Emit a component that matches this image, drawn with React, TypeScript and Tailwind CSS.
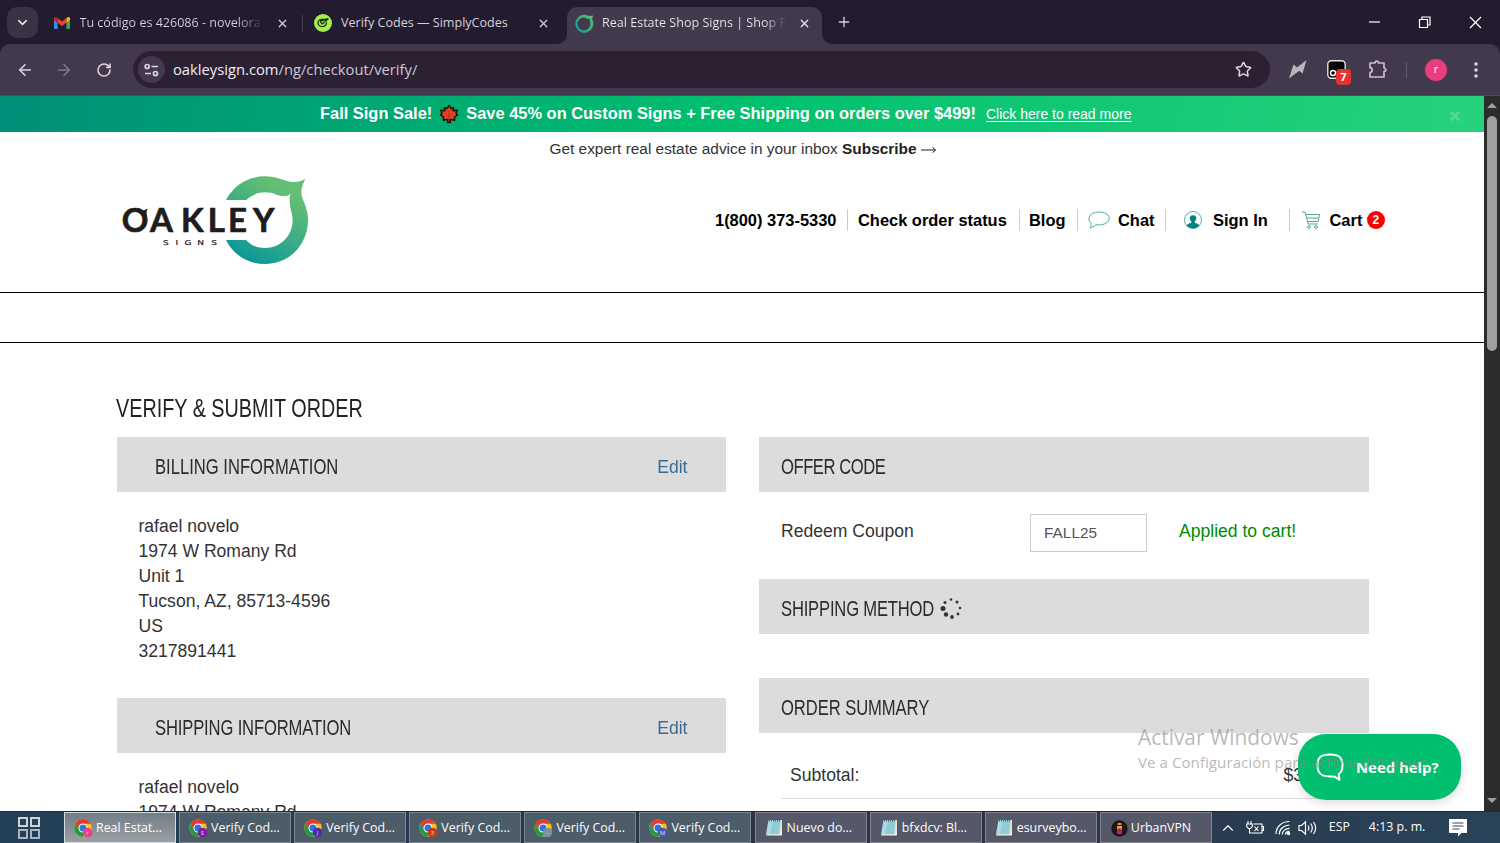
import type { ReactNode } from "react";
import { ArrowLeft, ArrowRight, ChevronDown, ChevronUp, Plus, RotateCw, Star, X } from "lucide-react";

const address = ["rafael novelo", "1974 W Romany Rd", "Unit 1", "Tucson, AZ, 85713-4596", "US", "3217891441"];

function GmailIcon() {
  return (
    <svg width="16" height="12" viewBox="0 0 16 12" className="shrink-0">
      <path d="M0 1.500V11a1 1 0 0 0 1 1h2.600V4.500z" fill="#4285f4" />
      <path d="M16 1.500V11a1 1 0 0 1-1 1h-2.600V4.500z" fill="#34a853" />
      <path d="M12.400 1.100 14 .2c1-.5 2 .2 2 1.300v1.600l-3.600 2.700z" fill="#fbbc04" />
      <path d="M3.600 1.100 8 4.400l4.400-3.300v4.700L8 9 3.600 5.800z" fill="#ea4335" />
      <path d="M0 1.500C0 .3 1.200-.4 2.200.1l1.400 1v4.700L0 3.100z" fill="#c5221f" />
    </svg>
  );
}

function SimplyIcon() {
  return (
    <svg width="18" height="18" viewBox="0 0 18 18" className="shrink-0">
      <circle cx="9" cy="9" r="9" fill="#a4f04b" />
      <path
        d="M9.500 5.500C6.500 4.800 4 6.500 4 9s3.300 4.500 6.300 3.200c2-1 2.200-2.500 2.200-3.200M6.800 8.500l1.700 1.500 5.500-5M6.500 7.300c1.500-1 3.500-1.500 7-2.300"
        fill="none"
        stroke="#1d2b12"
        strokeWidth="1.300"
        strokeLinecap="round"
      />
    </svg>
  );
}

function RingIcon() {
  return (
    <svg width="19" height="19" viewBox="0 0 19 19" className="shrink-0">
      <defs>
        <linearGradient id="ring" x1="0" y1="1" x2="1" y2="0">
          <stop offset="0" stopColor="#0c969a" />
          <stop offset="1" stopColor="#62bd71" />
        </linearGradient>
      </defs>
      <path
        d="M9 .8c2 0 3.600.7 4.800 1.300L18 1.500l-.8 3.900A9 9 0 1 1 9 .8zM9 3.400a6.400 6.400 0 1 0 6.200 5l-.6-3.400-2.700-.2A7 7 0 0 0 9 3.400z"
        fill="url(#ring)"
        fillRule="evenodd"
      />
    </svg>
  );
}

function ChromeIcon({ badge, letter }: { badge: string; letter: string }) {
  return (
    <svg width="19" height="19" viewBox="0 0 19 19" className="shrink-0">
      <circle cx="9" cy="9" r="8.700" fill="#fbc116" />
      <path d="M1.500 4.600A8.700 8.700 0 0 1 16.600 4.800H9L5.300 11z" fill="#e33b2e" />
      <path d="M1.500 4.600a8.700 8.700 0 0 0 7.300 13.100L12.700 11 9 13.200 5.300 11z" fill="#229a4a" />
      <circle cx="9" cy="9" r="4.500" fill="#fff" />
      <circle cx="9" cy="9" r="3.500" fill="#2f73e0" />
      <circle cx="13.500" cy="13.500" r="4.800" fill={badge} />
      <text x="13.500" y="15.700" fontSize="6" textAnchor="middle" fill="#ffffffcc" fontFamily="Open Sans, sans-serif">
        {letter}
      </text>
    </svg>
  );
}

function NotepadIcon() {
  return (
    <svg width="18" height="18" viewBox="0 0 18 18" className="mb-[3px] shrink-0">
      <path d="M4 2h13v15H2.500z" fill="#e9e2cf" />
      <path d="M3.500 2h12l-1.300 14.300H1z" fill="#a9dbe4" />
      <path d="M8 2h7.500l-1.300 14.300H5z" fill="#77bccb" opacity=".5" />
      <path d="M4 2.500h11.500" stroke="#4a626a" strokeWidth="2" strokeDasharray="1 1" />
      <path d="M1 16.500h13.500L16.700 14v3.500H1z" fill="#f5f2e9" />
    </svg>
  );
}

function VpnIcon() {
  return (
    <svg width="17" height="17" viewBox="0 0 17 17" className="shrink-0">
      <circle cx="8.500" cy="8.500" r="8.200" fill="#1b171b" />
      <rect x="6" y="6.500" width="5" height="7.500" rx="1" fill="#d3205d" />
      <path d="M6.700 3h3.600v2H6.700zM6 6h5v2l-2.500 3L6 8z" fill="#e6a23c" />
      <path d="M7.500 8.500h2v3h-2z" fill="#a3144c" />
    </svg>
  );
}

function Leaf() {
  return (
    <svg width="20" height="20" viewBox="0 0 20 20" className="mx-[7px] shrink-0">
      <path
        d="m10 1.500 2.300 3.200 2.300-.9-.3 3 4-.5-1.300 3 1.500 1.700-3.200 2.200.4 3-3.600-.8-1 .4.300 2.600H8.600l.3-2.600-1-.4-3.600.8.400-3-3.200-2.200L3 9.300l-1.300-3 4 .5-.3-3 2.300.9z"
        fill="#e5432a"
        stroke="#1c1206"
        strokeWidth="1.500"
        strokeLinejoin="round"
      />
      <path d="M10 6v9M10 13 6 9.500M10 13l4-3.500" stroke="#9b1d12" strokeWidth=".6" />
    </svg>
  );
}

function OakleyLogo() {
  return (
    <svg width="230" height="110" viewBox="0 0 690 330">
      <defs>
        <linearGradient id="oak" x1="0.100" y1="1" x2="0.600" y2="0.100">
          <stop offset="0" stopColor="#00939b" />
          <stop offset="0.500" stopColor="#35a988" />
          <stop offset="1" stopColor="#63bf73" />
        </linearGradient>
      </defs>
      <path
        d="M378 105C405 55 448 34 495 34C530 34 548 47 570 50C588 52 602 50 616 42C606 62 600 78 607 98C617 123 625 143 624 168C622 242 566 297 495 297C443 297 400 269 378 225H438C452 240 471 249 495 249C541 249 578 213 578 165C578 142 562 116 572 87C561 96 545 94 530 89C518 84 508 82 495 82C473 82 453 91 439 105Z"
        fill="url(#oak)"
      />
      <g fill="#1f1c20">
        <g stroke="#1f1c20" strokeWidth="2">
          <text x="65 150 243 323 384 459" y="202" fontFamily="Lato, sans-serif" fontWeight="700" fontSize="99">
            OAKLEY
          </text>
        </g>
        <path d="M112 134c13 8 23 0 31-3-5 10-3 15-2 23l-12 8c-1-9-1-10-1-14-7 1-12-2-16-14z" />
        <text
          x="140 168 188 216 247"
          y="240"
          transform="scale(1.35 1)"
          fontFamily="DejaVu Sans, sans-serif"
          fontSize="20"
          stroke="#1f1c20"
          strokeWidth=".6"
        >
          SIGNS
        </text>
      </g>
    </svg>
  );
}

function Tabs() {
  return (
    <div className="flex h-11 items-stretch bg-[#231c2e] text-[12.550px] text-[#d9cfdf]">
      <div className="flex w-[53.500px] items-center pl-[7px]">
        <div className="flex h-[31px] w-[31px] items-center justify-center rounded-[10px] bg-[#3b3244]">
          <ChevronDown size={15} strokeWidth={2.500} className="text-[#e8e0ec]" />
        </div>
      </div>
      <div className="flex w-[248.500px] items-center pt-[2px]">
        <GmailIcon />
        <span className="ml-[10px] w-[184px] overflow-hidden bg-gradient-to-r from-[#d9cfdf] from-85% to-transparent bg-clip-text whitespace-nowrap text-transparent">
          Tu código es 426086 - novelora
        </span>
        <X size={13} strokeWidth={2.200} className="ml-3" />
      </div>
      <div className="flex w-[265px] items-center pt-[2px]">
        <div className="mr-[11px] h-[17px] w-px bg-[#493f52]" />
        <SimplyIcon />
        <span className="ml-[9px] w-[196px] whitespace-nowrap">Verify Codes — SimplyCodes</span>
        <X size={13} strokeWidth={2.200} />
      </div>
      <div className="relative mt-[7px] flex w-[255px] items-center rounded-t-[10px] bg-[#43394c] pb-[5px] pl-2 text-[#eee6f1]">
        <svg width="10" height="10" className="absolute bottom-0 -left-[10px]">
          <path d="M10 0v10H0A10 10 0 0 0 10 0" fill="#43394c" />
        </svg>
        <svg width="10" height="10" className="absolute -right-[10px] bottom-0">
          <path d="M0 0v10h10A10 10 0 0 1 0 0" fill="#43394c" />
        </svg>
        <RingIcon />
        <span className="ml-2 w-[184px] overflow-hidden bg-gradient-to-r from-[#eee6f1] from-88% to-transparent bg-clip-text pt-px whitespace-nowrap text-transparent">
          Real Estate Shop Signs | Shop R
        </span>
        <X size={13} strokeWidth={2.200} className="ml-3" />
      </div>
      <div className="flex items-center pl-[14px]">
        <Plus size={16} strokeWidth={2} />
      </div>
      <div className="ml-auto flex items-center pr-[18px] text-white">
        <svg width="114" height="14" viewBox="0 0 114 14" fill="none" stroke="currentColor" strokeWidth="1.200">
          <path d="M1 7h11" />
          <path d="M51.500 4.500h8v8h-8zM54 4.500V2h8v8h-2.500" />
          <path d="m102 2 11 11M113 2l-11 11" />
        </svg>
      </div>
    </div>
  );
}

function Toolbar() {
  return (
    <div className="bg-[#231c2e]">
      <div className="flex h-[52px] items-center rounded-t-[10px] border-b border-[#53485c] bg-[#43394c] text-[#ddd3e2]">
        <ArrowLeft size={18} strokeWidth={2.200} className="ml-4" />
        <ArrowRight size={18} strokeWidth={2.200} className="ml-[21px] text-[#81768a]" />
        <RotateCw size={16} strokeWidth={2.400} className="ml-[23px]" />
        <div className="ml-[21px] flex h-[37px] w-[1137px] items-center rounded-full bg-[#2b2133]">
          <div className="ml-[5px] flex h-[27px] w-[27px] items-center justify-center rounded-full bg-[#43394c]">
            <svg width="15" height="14" viewBox="0 0 15 14" fill="none" stroke="currentColor" strokeWidth="1.700">
              <circle cx="3.200" cy="3.500" r="2" />
              <path d="M7.500 3.500H14M1 10.500h6" />
              <circle cx="11.500" cy="10.500" r="2" />
            </svg>
          </div>
          <span className="ml-2 text-[14.750px] text-[#cfc5d6]">
            <span className="text-[#f2ebf5]">oakleysign.com</span>/ng/checkout/verify/
          </span>
          <Star size={17} strokeWidth={2.200} className="mr-[18px] ml-auto" />
        </div>
        <svg width="19" height="19" viewBox="0 0 19 19" className="ml-[18px]">
          <path d="M18.500 0 14.500 13.500l-3.200-2.700L1 18.500 5.500 4.500l3.500 3z" fill="#b9b5bb" />
        </svg>
        <div className="relative ml-5 h-[19px] w-[19px]">
          <svg width="19" height="19" viewBox="0 0 19 19">
            <rect x=".8" y=".8" width="17.400" height="17.400" rx="3.500" fill="#050505" stroke="#e6e1e8" strokeWidth="1.400" />
            <circle cx="6" cy="13" r="2.500" fill="none" stroke="#fff" strokeWidth="1.400" />
          </svg>
          <span className="absolute top-[9px] left-[9px] flex h-4 w-[15px] items-center justify-center rounded-[4px] bg-[#e5312f] text-[11px] font-bold text-white">
            7
          </span>
        </div>
        <svg width="19" height="19" viewBox="0 0 19 19" className="ml-[22px]" fill="none" stroke="#cdb9da" strokeWidth="1.700">
          <path d="M2 3h5c0-2.500 3.500-2.500 3.500 0H16v5c2.400.2 2.400 3.500 0 3.500v5.500H2v-4.500c3-.3 3-4.500 0-4.800z" strokeLinejoin="round" />
        </svg>
        <div className="ml-[19px] h-4 w-px bg-[#665b6e]" />
        <div className="ml-[18px] flex h-[22px] w-[22px] items-center justify-center rounded-full bg-[#ea3d7b] text-[11px] text-white">
          r
        </div>
        <svg width="4" height="16" viewBox="0 0 4 16" fill="#ddd3e2" className="ml-[27px]">
          <circle cx="2" cy="2" r="1.800" />
          <circle cx="2" cy="8" r="1.800" />
          <circle cx="2" cy="14" r="1.800" />
        </svg>
      </div>
    </div>
  );
}

function Divider() {
  return <span className="h-[22px] w-px shrink-0 bg-[#ccc]" />;
}

function SiteHeader() {
  return (
    <>
      <div className="flex h-9 shrink-0 items-center bg-linear-[100deg,#008f78_0%,#00c06e_50%,#28d17e_100%] pb-px pl-[320px] text-[16.430px] font-bold whitespace-nowrap text-white">
        Fall Sign Sale!
        <Leaf />
        Save 45% on Custom Signs + Free Shipping on orders over $499!
        <span className="mt-px ml-[10px] text-[14px] font-normal underline underline-offset-2">Click here to read more</span>
        <span className="mt-[5px] ml-auto flex pr-[22px]">
          <X size={14} strokeWidth={5} className="text-[#50d896]" />
        </span>
      </div>
      <div className="flex h-[34px] shrink-0 items-center pl-[549.500px] text-[15.400px] whitespace-pre text-[#333]">
        Get expert real estate advice in your inbox <b className="text-[#222]">Subscribe</b>
        <svg width="16" height="8" viewBox="0 0 16 8" className="mt-[2px] ml-[4px]" fill="none" stroke="#222">
          <path d="M0 4h14.500M11.500 1.500l3 2.500-3 2.500" />
        </svg>
      </div>
      <div className="flex h-[126px] shrink-0 pl-[100px]">
        <div className="-mt-px">
          <OakleyLogo />
        </div>
        <nav className="mt-[43px] ml-[385px] flex h-[22px] items-center text-[16.430px] font-bold whitespace-nowrap text-black">
          <span className="w-[132px]">1(800) 373-5330</span>
          <Divider />
          <span className="ml-[10px] w-[161px]">Check order status</span>
          <Divider />
          <span className="ml-[9px] w-[48px]">Blog</span>
          <Divider />
          <svg width="22" height="18" viewBox="0 0 22 18" className="ml-[10px] shrink-0" fill="none" stroke="#4fa99b" strokeWidth="1">
            <path d="M3 12.500C-1 8.500.5 1 11 1s12.500 7 8 10.500C16 14 11 14.300 8 13.700 6 15.500 4 16.500 2 16.800c1-1.300 1.500-2.800 1-4.300z" />
          </svg>
          <span className="ml-[8px] w-[47px]">Chat</span>
          <Divider />
          <svg width="18" height="18" viewBox="0 0 18 18" className="ml-[18px] shrink-0">
            <circle cx="9" cy="9" r="8.500" fill="none" stroke="#5aaea2" />
            <path d="M3 15c0-2.500 3-2.800 4.300-3.300v-1.200C4.800 8 5.300 4.300 9 4.300s4.200 3.700 1.700 6.200v1.200c1.300.5 4.300.8 4.300 3.300a8.500 8.500 0 0 1-12 0z" fill="#00857a" />
          </svg>
          <span className="ml-[11px] w-[76px]">Sign In</span>
          <Divider />
          <svg width="18" height="18" viewBox="0 0 18 18" className="ml-[12px] shrink-0" fill="none" stroke="#4fa99b" strokeWidth="1">
            <path d="M0 1h3l3.200 12H16M3.700 3.500h14L16 10.500H5.500M4.500 7h12.300" />
            <circle cx="7" cy="16" r="1.400" />
            <circle cx="14" cy="16" r="1.400" />
          </svg>
          <span className="ml-[9.500px]">Cart</span>
          <span className="ml-[4.500px] flex h-[18px] w-[18px] items-center justify-center rounded-full bg-[#f00] text-[12px] text-white">2</span>
        </nav>
      </div>
      <div className="h-[51px] shrink-0 border-y border-black" />
    </>
  );
}

interface PanelTitleProps {
  children: ReactNode;
  action?: string;
  inset?: boolean;
  tracking?: string;
}

function PanelTitle({ children, action, inset, tracking = "" }: PanelTitleProps) {
  return (
    <div className={`flex h-[55px] items-center justify-between bg-[#dcdcdc] pr-[38.500px] ${inset ? "pl-[38px]" : "pl-[22px]"}`}>
      <h2 className="flex h-[26px] w-[155px] items-center pt-[3px] text-[22px] whitespace-nowrap text-[#2b2b2b]">
        <span className={`inline-block origin-left scale-x-[.755] ${tracking}`}>{children}</span>
      </h2>
      {action && <a className="mt-[6px] text-[17.600px] text-[#337ab7] brightness-90 saturate-75">{action}</a>}
    </div>
  );
}

function AddressBlock() {
  return (
    <div className="pt-[22px] pb-[34px] pl-[21.500px] text-[17.570px] leading-[25px]">
      {address.map((line) => (
        <p key={line}>{line}</p>
      ))}
    </div>
  );
}

function Spinner() {
  return (
    <svg width="22" height="22" viewBox="0 0 22 22" fill="#333">
      <circle cx="11" cy="2.500" r="1.300" />
      <circle cx="17" cy="5" r="1.500" />
      <circle cx="20" cy="11" r="1.300" />
      <circle cx="18" cy="17" r="1.400" />
      <circle cx="12" cy="20" r="1.900" />
      <circle cx="6" cy="17.500" r="2.200" />
      <circle cx="3" cy="11.500" r="2.500" />
      <circle cx="5" cy="5.500" r="1.500" />
    </svg>
  );
}

function Checkout() {
  return (
    <main className="shrink-0 pt-[51px] pl-[117px] text-[17.570px] text-[#333]">
      <h1 className="flex h-[30px] items-center text-[26.400px] whitespace-nowrap text-[#222]">
        <span className="-ml-px inline-block origin-left scale-x-[.75]">VERIFY &amp; SUBMIT ORDER</span>
      </h1>
      <div className="mt-[13px] flex gap-[33px]">
        <section className="w-[609px]">
          <PanelTitle inset action="Edit">
            BILLING INFORMATION
          </PanelTitle>
          <AddressBlock />
          <PanelTitle inset action="Edit" tracking="tracking-[-0.200px]">
            SHIPPING INFORMATION
          </PanelTitle>
          <AddressBlock />
        </section>
        <section className="w-[610px]">
          <PanelTitle tracking="tracking-[-0.600px]">OFFER CODE</PanelTitle>
          <div className="flex h-[87px] items-start pt-[22px] pl-[22px]">
            <span className="w-[249px] pt-1">Redeem Coupon</span>
            <div className="flex h-[38px] w-[117px] items-center border border-[#ccc] pl-[13px] text-[15.400px] text-[#555]">FALL25</div>
            <span className="pt-1 pl-8 text-[#008a00]">Applied to cart!</span>
          </div>
          <div className="relative">
            <PanelTitle tracking="tracking-[-0.250px]">SHIPPING METHOD</PanelTitle>
            <span className="absolute top-[18px] left-[181px]">
              <Spinner />
            </span>
          </div>
          <div className="mt-[44px]">
            <PanelTitle tracking="tracking-[-0.100px]">ORDER SUMMARY</PanelTitle>
          </div>
          <div className="mx-[22px] flex h-[66px] justify-between border-b border-[#ddd] pt-[29px] pr-[44px] pl-[9px]">
            <span>Subtotal:</span>
            <span>$3</span>
          </div>
        </section>
      </div>
    </main>
  );
}

function Scrollbar() {
  return (
    <div className="flex w-4 flex-col items-center bg-[#2c2c2c]">
      <svg width="10" height="20" viewBox="0 0 10 20">
        <path d="M0 12 5 7l5 5z" fill="#9f9f9f" />
      </svg>
      <div className="h-[235px] w-[10px] rounded-full bg-[#9f9f9f]" />
      <svg width="10" height="20" viewBox="0 0 10 20" className="mt-auto">
        <path d="M0 7l5 5 5-5z" fill="#9f9f9f" />
      </svg>
    </div>
  );
}

const tasks = [
  { label: "Real Estat...", icon: <ChromeIcon badge="#ee3f86" letter="r" />, active: true },
  { label: "Verify Cod...", icon: <ChromeIcon badge="#7b1fa2" letter="S" /> },
  { label: "Verify Cod...", icon: <ChromeIcon badge="#512da8" letter="J" /> },
  { label: "Verify Cod...", icon: <ChromeIcon badge="#c53a1b" letter="3" /> },
  { label: "Verify Cod...", icon: <ChromeIcon badge="#7c949e" letter="-" /> },
  { label: "Verify Cod...", icon: <ChromeIcon badge="#4657b8" letter="M" /> },
  { label: "Nuevo do...", icon: <NotepadIcon /> },
  { label: "bfxdcv: Bl...", icon: <NotepadIcon /> },
  { label: "esurveybo...", icon: <NotepadIcon /> },
  { label: "UrbanVPN", icon: <VpnIcon /> },
];

function Taskbar() {
  return (
    <div className="flex h-8 items-center border-t border-[#1b2c3c] bg-linear-to-r from-[#22405a] via-[#2b3242] via-60% to-[#29435a] text-[12.400px] text-white">
      <div className="flex w-16 justify-center pr-[6px]">
        <svg width="22" height="22" viewBox="0 0 22 22" fill="none" stroke="#d3d3d3" strokeWidth="2">
          <path d="M1 1h8v8H1zM13 1h8v8h-8z" />
          <path d="M1 13h8v8H1zM13 13h8v8h-8z" stroke="#aeb3b7" />
        </svg>
      </div>
      <div className="flex gap-[3.100px]">
        {tasks.map((task, i) => (
          <div
            key={i}
            className={`flex h-[31px] w-[112px] items-center border pt-px whitespace-nowrap ${
              task.active
                ? "border-[#d5dade] bg-linear-to-b from-[#727d86] to-[#9ba0a5]"
                : i < 6
                  ? "border-[#7b8891] bg-[#4d5c69]"
                  : "border-[#81838f] bg-[#555869]"
            } ${i === 9 ? "pl-[10px]" : "pl-[9px]"}`}
          >
            {task.icon}
            <span className={i > 5 && i < 9 ? "ml-[4px]" : "ml-[3px]"}>{task.label}</span>
          </div>
        ))}
      </div>
      <ChevronUp size={18} strokeWidth={1.500} className="ml-[7px]" />
      <svg width="19" height="14" viewBox="0 0 19 14" fill="none" stroke="currentColor" strokeWidth="1.100" className="ml-[9px]">
        <path d="M2 0v3M5 0v3M.7 3h5.600v2.500L4.500 7.500h-2L.7 5.500zM3.500 7.500v4.500H16V3H7.500M16 5.500h1.500v4H16M8.500 5.500l4 4.500M12.500 5.500l-4 4.500" />
      </svg>
      <svg width="16" height="16" viewBox="0 0 16 16" fill="none" stroke="currentColor" strokeWidth="1.200" className="ml-[10px]">
        <path d="M1 14C1 6.500 7 1.500 14.500 1.500M4.200 14.500C4.200 9 9 5 14.500 5M7.300 14.500C7.300 11 10.500 8.300 14.500 8.300M10.500 14.500c0-2 1.700-3.200 4-3.200" />
        <circle cx="13.500" cy="13.500" r="1.200" fill="currentColor" />
      </svg>
      <svg width="19" height="16" viewBox="0 0 19 16" fill="none" stroke="currentColor" strokeWidth="1.200" className="ml-[7px]">
        <path d="M1 5.500h2.500l4-3.700v12.400l-4-3.700H1zM10 5.500q1.800 2.500 0 5M12.700 3.500q3.200 4.500 0 9M15.500 2q4.300 6 0 12" />
      </svg>
      <span className="ml-[12px] w-[40px] text-[12.300px]">ESP</span>
      <span className="w-[80px] text-[12.400px] whitespace-nowrap">4:13 p. m.</span>
      <svg width="18" height="18" viewBox="0 0 18 18">
        <path d="M0 0h18v14h-5.500L9 17.500V14H0z" fill="#fff" />
        <path d="M3.500 4h11M3.500 7h11M3.500 10h7" stroke="#34495a" strokeWidth="1.200" />
      </svg>
    </div>
  );
}

function HelpButton() {
  return (
    <button className="absolute top-[734px] left-[1298px] flex h-[66px] w-[163px] items-center rounded-[28px] bg-[#00bf6f] pl-[18px] text-white shadow-[0_3px_10px_rgba(0,0,0,0.15)]">
      <svg width="28" height="28" viewBox="0 0 28 28" fill="none" stroke="currentColor" strokeWidth="2">
        <path d="M14 1.500C5 1.500 1.500 4 1.500 12.500S6 23.500 14 23.500c2 0 3.500 0 5 .3l4.500 3-.8-5.800c3-1.800 3.800-4.500 3.800-8.500C26.500 4 22.500 1.500 14 1.500z" strokeLinejoin="round" />
      </svg>
      <span className="ml-[12px] text-[14.900px] font-bold whitespace-nowrap">Need help?</span>
    </button>
  );
}

export default function App() {
  return (
    <div className="relative flex h-[843px] w-[1500px] flex-col overflow-hidden bg-white font-['Open_Sans','Noto_Sans',sans-serif]">
      <Tabs />
      <Toolbar />
      <div className="flex h-[715px]">
        <div className="flex w-[1484px] flex-col overflow-hidden bg-white font-['Liberation_Sans',Arial,sans-serif]">
          <SiteHeader />
          <Checkout />
        </div>
        <Scrollbar />
      </div>
      <Taskbar />
      <HelpButton />
      <div className="pointer-events-none absolute top-[723px] left-[1138px] whitespace-nowrap text-[#8a8a8a]/60">
        <p className="text-[20.900px] leading-[28px]">Activar Windows</p>
        <p className="text-[15.200px] leading-[22px]">Ve a Configuración para activar Windows.</p>
      </div>
    </div>
  );
}
